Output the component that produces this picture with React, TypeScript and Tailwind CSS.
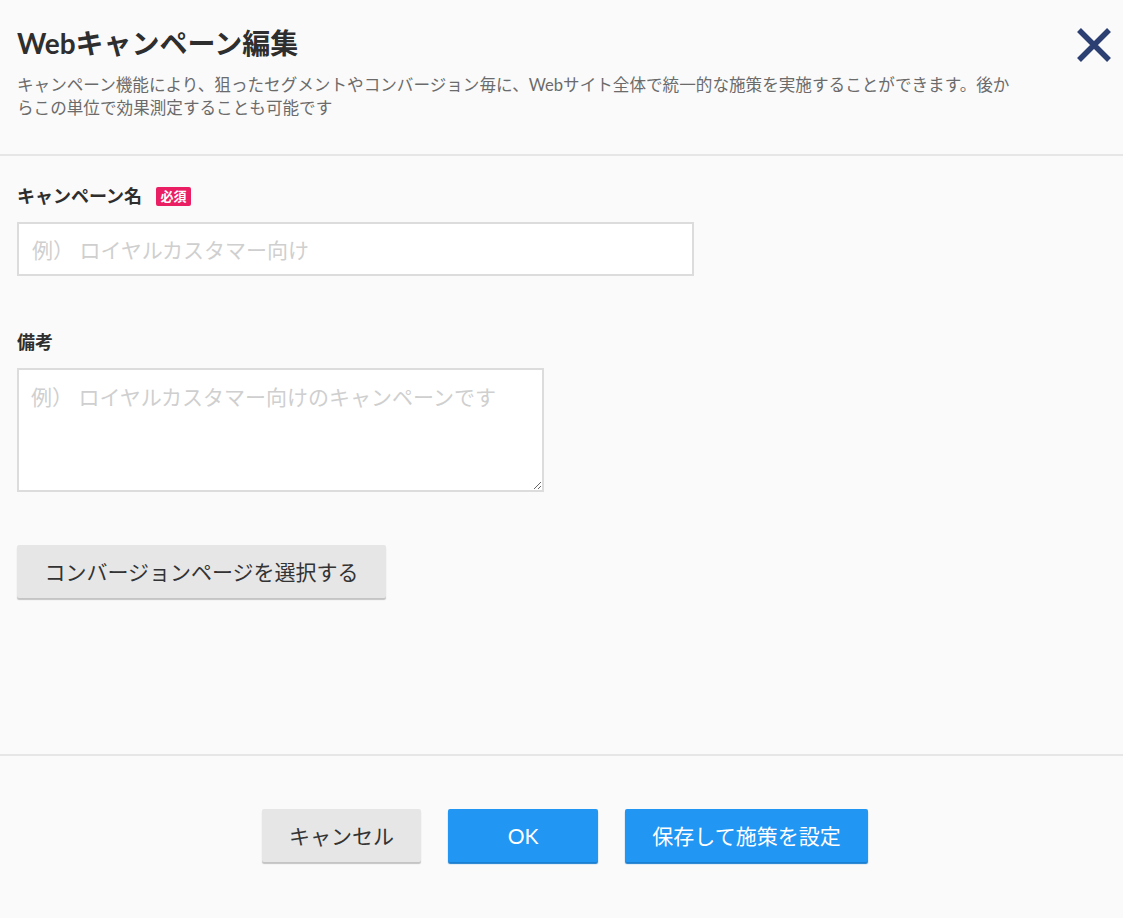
import React from "react";

const font = { fontFamily: "Lato, 'Noto Sans CJK JP', 'Noto Sans', sans-serif" };

export default function App() {
  return (
    <div
      className="w-[1123px] h-[918px] bg-[#fafafa] text-[#333] flex flex-col overflow-hidden"
      style={font}
    >
      {/* Header */}
      <div className="relative px-[17px] pt-[24px] pb-[34px] border-b-2 border-[#e6e6e6]">
        <h1 className="text-[28px] leading-[38px] font-bold text-[#2e2e2e]">Webキャンペーン編集</h1>
        <div className="mt-[12px] text-[16.6px] leading-[23px] text-[#6b6b6b]">
          <div className="whitespace-nowrap">
            キャンペーン機能により、狙ったセグメントやコンバージョン毎に、Webサイト全体で統一的な施策を実施することができます。後か
          </div>
          <div className="whitespace-nowrap">らこの単位で効果測定することも可能です</div>
        </div>
        <button className="absolute right-[11px] top-[27px] w-[36px] h-[36px]" aria-label="close">
          <svg viewBox="0 0 36 36" width="36" height="36">
            <path d="M3 3 L33 33 M33 3 L3 33" stroke="#2c3f73" strokeWidth="5.5" strokeLinecap="butt" fill="none" />
          </svg>
        </button>
      </div>

      {/* Body */}
      <div className="px-[17px] pt-[28px] pb-[156px] border-b-2 border-[#e6e6e6]">
        <div className="flex items-center h-[24px]">
          <span className="text-[18px] font-bold text-[#2e2e2e]">キャンペーン名</span>
          <span className="ml-[14px] bg-[#e91e63] text-white text-[13px] font-bold leading-[19px] px-[4.5px] rounded-[2px]">
            必須
          </span>
        </div>
        <input
          className="mt-[14px] block w-[677px] h-[54px] border-2 border-[#dcdcdc] bg-white px-[13px] text-[21px] placeholder:text-[#cfcfcf] outline-none"
          placeholder="例） ロイヤルカスタマー向け"
          style={font}
        />

        <div className="mt-[54px] h-[24px] flex items-center">
          <span className="text-[18px] font-bold text-[#2e2e2e]">備考</span>
        </div>
        <textarea
          className="mt-[14px] block w-[527px] h-[124px] border-2 border-[#dcdcdc] bg-white px-[12px] py-[12px] text-[21px] leading-[30px] placeholder:text-[#cfcfcf] outline-none"
          placeholder="例） ロイヤルカスタマー向けのキャンペーンです"
          style={font}
        />

        <button
          className="mt-[53px] block w-[369px] h-[53px] bg-[#e6e6e6] rounded-[2px] shadow-[0_2px_1px_#c4c4c4] text-[21px] text-[#333]"
          style={font}
        >
          コンバージョンページを選択する
        </button>
      </div>

      {/* Footer */}
      <div className="flex justify-center gap-[27px] pt-[53px] pl-[7px]">
        <button
          className="w-[159px] h-[53px] bg-[#e6e6e6] rounded-[2px] shadow-[0_2px_1px_#c4c4c4] text-[21px] text-[#333]"
          style={font}
        >
          キャンセル
        </button>
        <button
          className="w-[150px] h-[53px] bg-[#2196f3] rounded-[2px] shadow-[0_2px_1px_#1a7fd0] text-[21px] text-white"
          style={font}
        >
          OK
        </button>
        <button
          className="w-[243px] h-[53px] bg-[#2196f3] rounded-[2px] shadow-[0_2px_1px_#1a7fd0] text-[21px] text-white"
          style={font}
        >
          保存して施策を設定
        </button>
      </div>
    </div>
  );
}
